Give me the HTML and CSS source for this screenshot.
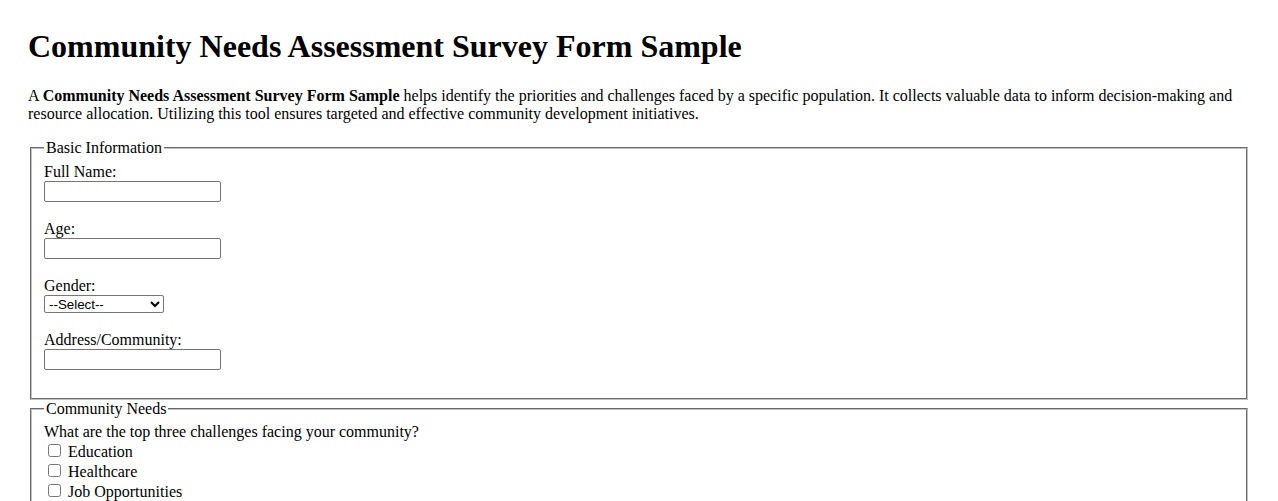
FILE: index.html
```html
<!DOCTYPE html>
<html lang="en">
<head>
<meta charset="utf-8">
<title>Community Needs Assessment Survey Form Sample</title>
<link rel="stylesheet" href="styles.css">
</head>
<body>
<h1 class="title">Community Needs Assessment Survey Form Sample</h1>
<p class="intro">A <strong>Community Needs Assessment Survey Form Sample</strong> helps identify the priorities and challenges faced by a specific population. It collects valuable data to inform decision-making and resource allocation. Utilizing this tool ensures targeted and effective community development initiatives.</p>
<form class="survey">
  <fieldset class="group">
    <legend class="group-title">Basic Information</legend>
    <label for="name">Full Name:</label><br>
    <input class="field" type="text" id="name"><br><br>
    <label for="age">Age:</label><br>
    <input class="field" type="number" id="age"><br><br>
    <label for="gender">Gender:</label><br>
    <select class="choice" id="gender">
      <option>--Select--</option>
      <option>Male</option>
      <option>Female</option>
      <option>Other</option>
      <option>Prefer not to say</option>
    </select><br><br>
    <label for="address">Address/Community:</label><br>
    <input class="field" type="text" id="address"><br><br>
  </fieldset>
  <fieldset class="group">
    <legend class="group-title">Community Needs</legend>
    <label>What are the top three challenges facing your community?</label><br>
    <input class="check" type="checkbox" id="c1"> <label for="c1">Education</label><br>
    <input class="check" type="checkbox" id="c2"> <label for="c2">Healthcare</label><br>
    <input class="check" type="checkbox" id="c3"> <label for="c3">Job Opportunities</label><br>
    <input class="check" type="checkbox" id="c4"> <label for="c4">Housing</label><br>
    <input class="check" type="checkbox" id="c5"> <label for="c5">Public Safety</label><br>
  </fieldset>
</form>
</body>
</html>
```

FILE: styles.css
```css
html {
  background: #ffffff;
}
body {
  margin: 8px;
  padding: 20px;
  font-family: "Liberation Serif", "Times New Roman", serif;
  font-size: 16px;
  color: #000000;
}
.title {
  margin: 0 0 22px;
  font-size: 32px;
  font-weight: bold;
}
.intro {
  margin: 0 0 16px;
}
.survey {
  margin: 0;
}
.group {
  margin: 0 2px;
  padding: 5.6px 12px 10px;
  border: 2px groove #c0c0c0;
}
.group-title {
  padding: 0 2px;
}
.field {
  box-sizing: border-box;
  width: 177px;
  height: 21px;
  padding: 1px 2px;
  border: 1px solid #767676;
  border-radius: 2px;
  font-family: "Liberation Sans", Arial, sans-serif;
  font-size: 13.33px;
  margin: 0;
}
.choice {
  box-sizing: border-box;
  width: 120px;
  height: 18px;
  font-family: "Liberation Sans", Arial, sans-serif;
  font-size: 13.33px;
  margin: 0;
  border: 1px solid #767676;
  border-radius: 2px;
  background: #ffffff;
  color: #000;
}
.check {
  margin: 3px 3px 3px 4px;
  width: 13px;
  height: 13px;
}
```
